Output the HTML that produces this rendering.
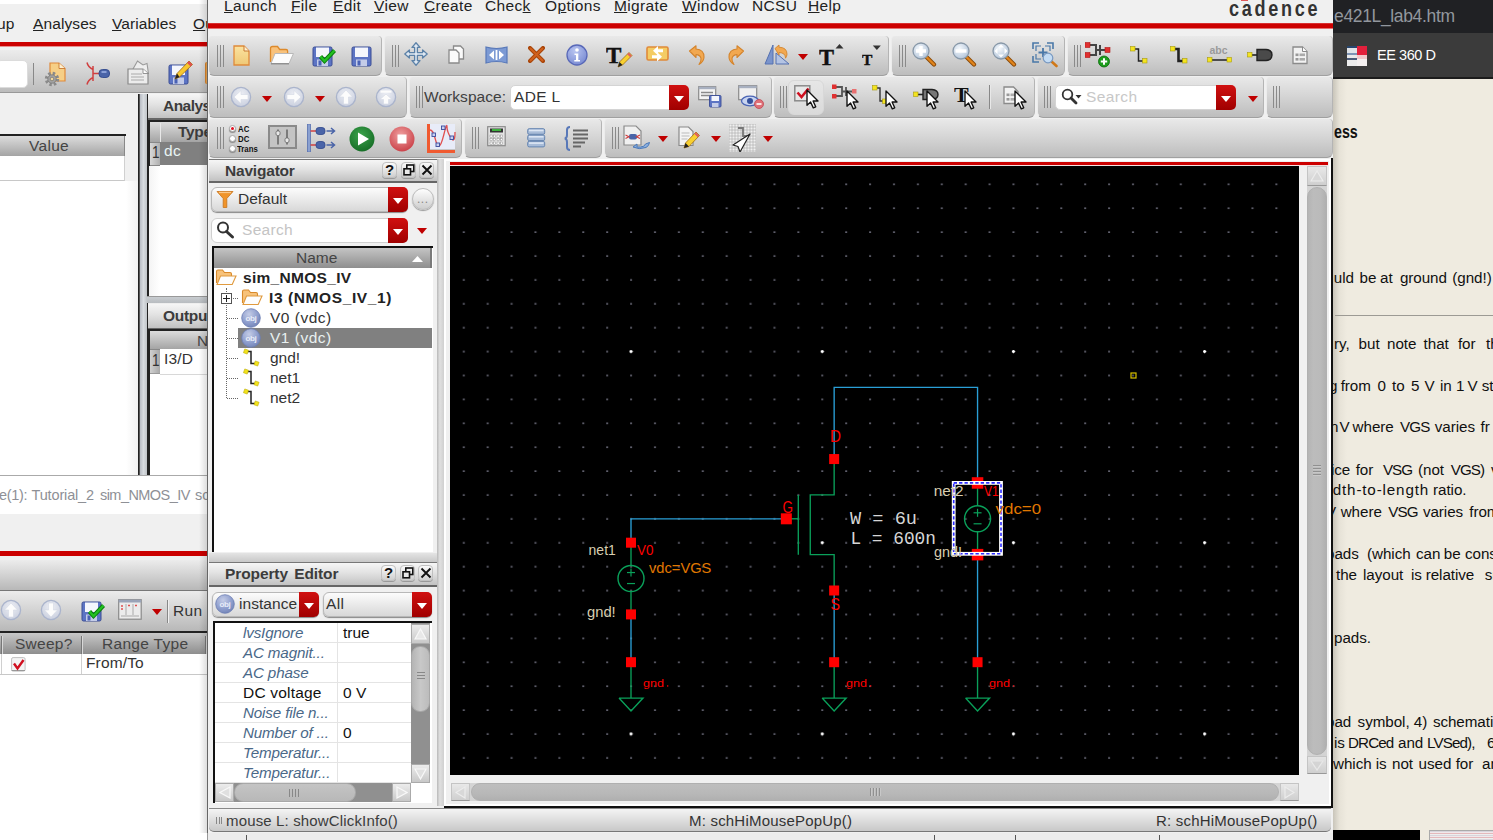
<!DOCTYPE html>
<html><head><meta charset="utf-8"><title>Virtuoso Schematic Editor</title>
<style>
*{box-sizing:border-box;margin:0;padding:0}
html,body{width:1493px;height:840px;overflow:hidden;background:#fff}
body{position:relative;font-family:"Liberation Sans",sans-serif;font-size:16px;color:#222}
.a{position:absolute}
.t{position:absolute;white-space:nowrap;line-height:1}
u{text-decoration:underline;text-underline-offset:1px;text-decoration-thickness:1px}
.tb{position:absolute;background:linear-gradient(#e9e9e9,#d6d6d6 45%,#bdbdbd);border-bottom:1px solid #a0a0a0;border-right:1px solid #b4b4b4;border-left:1px solid #ececec;border-radius:4px 4px 6px 6px}
.grip{position:absolute;width:7px;border-left:1px solid #8a8a8a;border-right:1px solid #8a8a8a}
.grip:after{content:"";position:absolute;left:2px;top:0;bottom:0;width:1px;background:#8a8a8a}
.hd{position:absolute;background:linear-gradient(#dcdcdc,#a4a4a4);color:#444}
.ttl{position:absolute;background:linear-gradient(#f6f6f6,#e2e2e2 45%,#c2c2c2);border-top:1px solid #777;border-bottom:2px solid #666;font-weight:bold;color:#333}
.rbtn{position:absolute;background:linear-gradient(#d01010,#a00000);border-radius:0 5px 5px 0}
.rbtn:after{content:"";position:absolute;left:50%;top:50%;margin:-2px 0 0 -5px;border:5px solid transparent;border-top:6px solid #fff;border-bottom:none}
.tri{position:absolute;width:0;height:0;border:5px solid transparent;border-top:6px solid #c00000;border-bottom:none}
.pg{font-size:15.2px;color:#101010;letter-spacing:-.05px}
</style></head><body>

<!-- ================= BACKGROUND ADE WINDOW (left) ================= -->
<div id="ade" class="a" style="left:0;top:0;width:208px;height:840px;overflow:hidden;background:#fff">
<!--ADE-->
<div class="a" style="left:0;top:4px;width:208px;height:90px;background:#f0f0f0"></div>
<div class="t" style="left:-3px;top:15.8px;font-size:15.5px;letter-spacing:.1px;color:#222">up</div>
<div class="t" style="left:33px;top:15.8px;font-size:15.5px;letter-spacing:.1px;color:#222"><u>A</u>nalyses</div>
<div class="t" style="left:112px;top:15.8px;font-size:15.5px;letter-spacing:.1px;color:#222"><u>V</u>ariables</div>
<div class="t" style="left:193px;top:15.8px;font-size:15.5px;letter-spacing:.1px;color:#222"><u>O</u>utputs</div>
<div class="a" style="left:0;top:42px;width:208px;height:5px;background:linear-gradient(#cc0000 0 4px,#e89090 4px)"></div>
<div class="a" style="left:0;top:50px;width:208px;height:43px;background:linear-gradient(#ececec,#bcbcbc);border-bottom:1px solid #999"></div>
<div class="a" style="left:-4px;top:60px;width:32px;height:28px;background:#fff;border-radius:5px;border:1px solid #dcdcdc"></div>
<div class="a" style="left:33px;top:63px;width:1px;height:22px;background:#888"></div>
<svg class="a" style="left:44px;top:62px" width="23" height="25" viewBox="0 0 23 25"><path d="M6 1H15L21 6.5V19H6z" fill="#f6cf86" stroke="#e08a3a" stroke-width="1.200"/><path d="M15 1V6.5H21" fill="#fdf0d0" stroke="#c87830" stroke-width=".9"/><g transform="translate(8,17)"><circle r="5.600" fill="none" stroke="#8a8a8a" stroke-width="3.200" stroke-dasharray="2.400 2"/><circle r="4.200" fill="#a4a4a4" stroke="#777" stroke-width=".8"/><circle r="1.800" fill="#f0d8a0" stroke="#666" stroke-width=".6"/></g></svg>
<svg class="a" style="left:85px;top:61px" width="26" height="25" viewBox="0 0 26 25"><path d="M2 1.5Q3 6 8 8.5M2 23.5Q3 19 8 16.5M8 5V20M8 12.5H14" fill="none" stroke="#d04040" stroke-width="1.5"/><rect x="14" y="8.5" width="10.5" height="8" rx="3.5" fill="#4a64a8" stroke="#30488c" stroke-width=".9"/><rect x="16.5" y="10" width="5" height="2" fill="#8aa0d8"/></svg>
<svg class="a" style="left:126.5px;top:59.5px" width="23" height="25" viewBox="0 0 23 25"><path d="M6 9L10.5 1L16 5L20 3.5L21.5 14" fill="#eee" stroke="#999" stroke-width="1.100"/><path d="M1 9H16L21 13.5V24H1z" fill="#ececec" stroke="#8a8a8a" stroke-width="1.200"/><path d="M16 9V13.5H21" fill="#fff" stroke="#8a8a8a" stroke-width=".9"/><path d="M4 14h11M4 17h13M4 20h13" stroke="#aaa" stroke-width="1.100"/></svg>
<svg class="a" style="left:167.5px;top:60px" width="26" height="26" viewBox="0 -4 26 26"><rect x="1" y="1" width="19" height="19" rx="1.5" fill="#5c74c4" stroke="#3a4c94" stroke-width="1"/><rect x="4" y="1.5" width="13" height="9.5" fill="#f4f6fc"/><rect x="5" y="13.5" width="11" height="6.5" fill="#c4cce8"/><rect x="6.5" y="14.5" width="3" height="5" fill="#4a62b4"/><path d="M7 15l2-5.5L21-3l3.5 3.5L11.5 13z" fill="#f8c830" stroke="#a06a10" stroke-width=".8"/><path d="M7 15l2-5.5 2.5 3.5z" fill="#222"/><path d="M20-2l3.5 3.5" stroke="#e05050" stroke-width="2.5"/></svg>
<div class="a" style="left:205px;top:62px;width:4px;height:22px;background:#f0a850;border-left:1px solid #d8842c;border-radius:2px 0 0 2px"></div>
<div class="a" style="left:0;top:94px;width:138px;height:382px;background:#f0f0f0"></div>
<div class="a" style="left:0;top:181px;width:126px;height:295px;background:#fff"></div>
<div class="a" style="left:126px;top:181px;width:12px;height:295px;background:linear-gradient(90deg,#fff,#f2f2f2)"></div>
<div class="a" style="left:0;top:134px;width:126px;height:2px;background:#222"></div>
<div class="hd" style="left:0;top:136px;width:125px;height:20px;border-right:1px solid #888"></div>
<div class="t" style="left:29px;top:138px;font-size:15.5px;color:#444;letter-spacing:.3px">Value</div>
<div class="a" style="left:0;top:156px;width:125px;height:25px;background:#fff;border-right:1px solid #d0d0d0;border-bottom:1px solid #c8c8c8"></div>
<div class="a" style="left:138px;top:94px;width:2px;height:382px;background:linear-gradient(90deg,#222 0 1px,#555 1px)"></div>
<div class="a" style="left:140px;top:94px;width:7px;height:382px;background:linear-gradient(90deg,#b8bcc4,#d8dce0 50%,#c0c4c8)"></div>
<div class="a" style="left:147px;top:94px;width:1px;height:382px;background:#222"></div>
<div class="a" style="left:148px;top:94px;width:60px;height:382px;background:#fff"></div>
<div class="ttl" style="left:148px;top:94px;width:60px;height:26px;border-top:none"></div>
<div class="t" style="left:163px;top:98px;font-size:15.5px;font-weight:bold;color:#3c3c3c;letter-spacing:-.55px">Analyses</div>
<div class="a" style="left:148px;top:120px;width:60px;height:2px;background:#222"></div>
<div class="a" style="left:148px;top:120px;width:2px;height:176px;background:#222"></div>
<div class="a" style="left:148px;top:329px;width:2px;height:147px;background:#222"></div>
<div class="hd" style="left:150px;top:122px;width:58px;height:20px"></div><div class="a" style="left:160px;top:123px;width:1px;height:19px;background:#e8e8e8"></div>
<div class="t" style="left:178px;top:124px;font-size:15.5px;font-weight:bold;color:#3c3c3c;letter-spacing:-.3px">Type</div>
<div class="a" style="left:150px;top:142px;width:10px;height:24px;background:linear-gradient(90deg,#d8d8d8,#b0b0b0);border-top:1px solid #888;border-bottom:1px solid #888"></div>
<div class="t" style="left:151.5px;top:145px;font-size:16px;color:#333;transform:scaleX(.85);transform-origin:0 0">1</div>
<div class="a" style="left:160px;top:142px;width:48px;height:23px;background:#808080"></div>
<div class="t" style="left:164px;top:143px;font-size:15.5px;color:#e8f4f4;letter-spacing:.4px">dc</div>
<div class="a" style="left:149px;top:166px;width:11px;height:130px;background:linear-gradient(90deg,#f4f4f4,#fff)"></div>
<div class="a" style="left:147px;top:296px;width:61px;height:7px;background:linear-gradient(#c8ccd0,#b8bcc0);border-top:1px solid #999"></div>
<div class="ttl" style="left:148px;top:303px;width:60px;height:27px;border-top:1px solid #eee"></div>
<div class="t" style="left:163px;top:308px;font-size:15.5px;font-weight:bold;color:#3c3c3c;letter-spacing:-.3px">Outputs</div>
<div class="a" style="left:148px;top:329px;width:60px;height:2px;background:#222"></div>
<div class="hd" style="left:150px;top:331px;width:58px;height:18px"></div>
<div class="t" style="left:197px;top:333px;font-size:15.5px;color:#444">Name</div>
<div class="a" style="left:150px;top:349px;width:10px;height:25px;background:linear-gradient(90deg,#d0d0d0,#a8a8a8);border-top:1px solid #888;border-bottom:1px solid #999"></div>
<div class="t" style="left:151.5px;top:353px;font-size:16px;color:#333;transform:scaleX(.85);transform-origin:0 0">1</div>
<div class="t" style="left:164px;top:351px;font-size:15.5px;color:#333;letter-spacing:.2px">I3/D</div>
<div class="a" style="left:160px;top:374px;width:48px;height:1px;background:#d8d8d8"></div>
<div class="a" style="left:0;top:475px;width:208px;height:39px;background:#fff;border-top:1px solid #aaa"></div>
<div class="t" style="left:-1px;top:488px;font-size:14.5px;color:#8e9096;letter-spacing:-0.3px">e(1):</div>
<div class="t" style="left:31.5px;top:488px;font-size:14.5px;color:#8e9096;letter-spacing:-0.15px">Tutorial_2</div>
<div class="t" style="left:100px;top:488px;font-size:14.5px;color:#8e9096;letter-spacing:-0.55px">sim_NMOS_IV</div>
<div class="t" style="left:195px;top:488px;font-size:14.5px;color:#8e9096;letter-spacing:0px">sc</div>
<div class="a" style="left:0;top:514px;width:208px;height:46px;background:#f0f0f0"></div>
<div class="a" style="left:0;top:551px;width:208px;height:5px;background:#cc0000"></div>
<div class="a" style="left:0;top:560px;width:208px;height:31px;background:linear-gradient(#ececec,#b8b8b8);border-bottom:1px solid #777"></div>
<div class="a" style="left:0;top:591px;width:208px;height:42px;background:linear-gradient(#ececec,#b8b8b8);border-bottom:2px solid #222"></div>
<svg class="a" style="left:0px;top:599px" width="22" height="22" viewBox="0 0 22 22"><defs><radialGradient id="ncg" cx=".5" cy=".35" r=".75"><stop offset="0" stop-color="#eceef4"/><stop offset="1" stop-color="#c6ccdc"/></radialGradient></defs><circle cx="11" cy="11" r="9.600" fill="url(#ncg)" stroke="#aab4cc" stroke-width="1.300"/><g transform="rotate(90 11 11)"><path d="M4 11l7-6.5v4h7v5h-7v4z" fill="#fcfcfc" stroke="#d4d8e4" stroke-width=".6"/></g></svg>
<svg class="a" style="left:40px;top:599px" width="22" height="22" viewBox="0 0 22 22"><defs><radialGradient id="ncg" cx=".5" cy=".35" r=".75"><stop offset="0" stop-color="#eceef4"/><stop offset="1" stop-color="#c6ccdc"/></radialGradient></defs><circle cx="11" cy="11" r="9.600" fill="url(#ncg)" stroke="#aab4cc" stroke-width="1.300"/><g transform="rotate(-90 11 11)"><path d="M4 11l7-6.5v4h7v5h-7v4z" fill="#fcfcfc" stroke="#d4d8e4" stroke-width=".6"/></g></svg>
<svg class="a" style="left:81px;top:600.5px" width="26" height="22" viewBox="0 0 26 22"><rect x="1" y="1" width="19" height="19" rx="1.5" fill="#5c74c4" stroke="#3a4c94" stroke-width="1"/><rect x="4" y="1.5" width="13" height="9.5" fill="#f4f6fc"/><rect x="5" y="13.5" width="11" height="6.5" fill="#c4cce8"/><rect x="6.5" y="14.5" width="3" height="5" fill="#4a62b4"/><path d="M8.5 10.5l4 4.5l10-10.5" fill="none" stroke="#0a7a0a" stroke-width="4.2"/><path d="M8.5 10.5l4 4.5l10-10.5" fill="none" stroke="#22c022" stroke-width="2.4"/></svg>
<svg class="a" style="left:117.5px;top:599px" width="24" height="21" viewBox="0 0 24 21"><rect x=".7" y=".7" width="22.5" height="19.5" fill="#ececec" stroke="#8a8a8a" stroke-width="1.200"/><rect x=".7" y=".7" width="22.5" height="2.800" fill="#9aa4b8"/><path d="M8 5V16M15 5V16M3 17H21" stroke="#aaa" stroke-width="1"/><path d="M3 7h2M3 10h2M10 6.5h2M17 6.5h2" stroke="#e05050" stroke-width="1.400"/></svg>
<div class="tri" style="left:152px;top:608.5px"></div>
<div class="a" style="left:167px;top:600px;width:1px;height:23px;background:#888"></div><div class="a" style="left:168px;top:600px;width:1px;height:23px;background:#f0f0f0"></div>
<div class="t" style="left:173px;top:603px;font-size:15.5px;color:#333;letter-spacing:.3px">Run</div>
<div class="hd" style="left:0;top:633px;width:208px;height:21px;background:linear-gradient(#c8c8c8,#8e8e8e)"></div>
<div class="a" style="left:1px;top:636px;width:1px;height:18px;background:#777"></div><div class="a" style="left:2px;top:636px;width:1px;height:18px;background:#d8d8d8"></div>
<div class="a" style="left:81px;top:636px;width:1px;height:18px;background:#777"></div><div class="a" style="left:82px;top:636px;width:1px;height:18px;background:#d8d8d8"></div>
<div class="a" style="left:205px;top:636px;width:1px;height:18px;background:#777"></div><div class="a" style="left:206px;top:636px;width:1px;height:18px;background:#d8d8d8"></div>
<div class="t" style="left:15px;top:636px;font-size:15.5px;color:#444;letter-spacing:.25px">Sweep?</div>
<div class="t" style="left:102px;top:636px;font-size:15.5px;color:#444;letter-spacing:.3px">Range Type</div>
<div class="a" style="left:0;top:654px;width:208px;height:21px;background:#fff;border-bottom:1px solid #c8c8c8"></div>
<div class="a" style="left:81px;top:654px;width:1px;height:20px;background:#d0d0d0"></div><div class="a" style="left:1px;top:654px;width:1px;height:20px;background:#d0d0d0"></div>
<svg class="a" style="left:10.5px;top:656.5px" width="15" height="15" viewBox="0 0 15 15"><rect x=".6" y=".6" width="13.5" height="13.5" rx="1.5" fill="#f4f4f4" stroke="#c0c0c0" stroke-width="1"/><path d="M.6 13.5H14" stroke="#999" stroke-width="1"/><path d="M3 6.5l3.5 5 6-8.5" fill="none" stroke="#d01020" stroke-width="2.400"/></svg>
<div class="t" style="left:86px;top:655px;font-size:15.5px;color:#333;letter-spacing:.15px">From/To</div>
<div class="a" style="left:199px;top:0;width:8px;height:833px;background:linear-gradient(90deg,rgba(0,0,0,0),rgba(0,0,0,.13))"></div>
<!--/ADE-->
</div>

<!-- ================= BROWSER (right) ================= -->
<div id="web" class="a" style="left:1333px;top:0;width:160px;height:840px;overflow:hidden;background:#efebe0"><!--WEB-->
<div class="a" style="left:-1333px;top:0;width:1493px;height:840px">
<div class="a" style="left:1333px;top:0;width:160px;height:33px;background:#202124"></div>
<div class="t" style="left:1334px;top:8px;font-size:17.5px;color:#92979e;letter-spacing:-.35px">e421L_lab4.htm</div>
<div class="a" style="left:1333px;top:33px;width:160px;height:46px;background:#3b3b3b;border-bottom:2px solid #1c1c1c"></div>
<div class="a" style="left:1347px;top:46px;width:10px;height:20px;background:linear-gradient(#27466e 0 2px,#dfe3e8 2px 7px,#7d93b4 7px 9px,#e8e8ea 9px 12px,#4a5a78 12px 14px,#ececec 14px)"></div>
<div class="a" style="left:1357px;top:46px;width:10px;height:20px;background:linear-gradient(#e2203c 0 9px,#f0c8cc 9px 13px,#f4f0f0 13px)"></div>
<div class="t" style="left:1377px;top:48px;font-size:14.5px;color:#fff;letter-spacing:-.45px">EE 360 D</div>
<div class="a" style="left:1333px;top:79px;width:14px;height:761px;background:linear-gradient(90deg,#c9c5ba,#e6e2d7 45%,#efebe0)"></div>
<div class="t" style="left:1333.5px;top:123px;font-size:18.5px;font-weight:bold;color:#111;transform:scaleX(.77);transform-origin:0 0">ess</div>
<div class="a" style="left:1335px;top:315px;width:158px;height:1px;background:#9c9a94"></div>
<span class="t pg" style="left:1333.8px;top:269.95px">uld</span><span class="t pg" style="left:1359.5px;top:269.95px">be</span><span class="t pg" style="left:1380px;top:269.95px">at</span><span class="t pg" style="left:1399.9px;top:269.95px">ground</span><span class="t pg" style="left:1452.3px;top:269.95px">(gnd!)</span>
<span class="t pg" style="left:1334px;top:335.95px">ry,</span><span class="t pg" style="left:1358.6px;top:335.95px">but</span><span class="t pg" style="left:1387px;top:335.95px">note</span><span class="t pg" style="left:1423.6px;top:335.95px">that</span><span class="t pg" style="left:1457.9px;top:335.95px">for</span><span class="t pg" style="left:1486px;top:335.95px">th</span>
<span class="t pg" style="left:1329px;top:377.65px">g</span><span class="t pg" style="left:1340.7px;top:377.65px">from</span><span class="t pg" style="left:1377.6px;top:377.65px">0</span><span class="t pg" style="left:1392px;top:377.65px">to</span><span class="t pg" style="left:1411px;top:377.65px">5</span><span class="t pg" style="left:1424.5px;top:377.65px">V</span><span class="t pg" style="left:1440px;top:377.65px">in</span><span class="t pg" style="left:1456px;top:377.65px">1</span><span class="t pg" style="left:1467.6px;top:377.65px">V</span><span class="t pg" style="left:1481.7px;top:377.65px">st</span>
<span class="t pg" style="left:1330px;top:419.15px">n</span><span class="t pg" style="left:1339.5px;top:419.15px">V</span><span class="t pg" style="left:1352.6px;top:419.15px">where</span><span class="t pg" style="left:1400px;top:419.15px;letter-spacing:-.9px">VGS</span><span class="t pg" style="left:1434.8px;top:419.15px">varies</span><span class="t pg" style="left:1480.5px;top:419.15px">fr</span>
<span class="t pg" style="left:1331px;top:461.65px">ice</span><span class="t pg" style="left:1355.7px;top:461.65px">for</span><span class="t pg" style="left:1382.9px;top:461.65px;letter-spacing:-.9px">VSG</span><span class="t pg" style="left:1418px;top:461.65px">(not</span><span class="t pg" style="left:1450.7px;top:461.65px;letter-spacing:-.9px">VGS)</span><span class="t pg" style="left:1491px;top:461.65px">v</span>
<span class="t pg" style="left:1328.5px;top:482.15px;letter-spacing:.85px">idth-to-length</span><span class="t pg" style="left:1433px;top:482.15px">ratio.</span>
<span class="t pg" style="left:1326px;top:503.55px">V</span><span class="t pg" style="left:1340.7px;top:503.55px">where</span><span class="t pg" style="left:1388.3px;top:503.55px;letter-spacing:-.9px">VSG</span><span class="t pg" style="left:1422.9px;top:503.55px">varies</span><span class="t pg" style="left:1469.3px;top:503.55px">from</span>
<span class="t pg" style="left:1326px;top:545.95px">pads</span><span class="t pg" style="left:1367px;top:545.95px">(which</span><span class="t pg" style="left:1416px;top:545.95px">can</span><span class="t pg" style="left:1443.8px;top:545.95px">be</span><span class="t pg" style="left:1465px;top:545.95px">cons</span>
<span class="t pg" style="left:1336px;top:566.65px">the</span><span class="t pg" style="left:1363px;top:566.65px">layout</span><span class="t pg" style="left:1411px;top:566.65px">is</span><span class="t pg" style="left:1425.7px;top:566.65px">relative</span><span class="t pg" style="left:1484.8px;top:566.65px">sm</span>
<span class="t pg" style="left:1334px;top:629.75px">pads.</span>
<span class="t pg" style="left:1326px;top:713.85px">pad</span><span class="t pg" style="left:1357.6px;top:713.85px">symbol,</span><span class="t pg" style="left:1413.8px;top:713.85px">4)</span><span class="t pg" style="left:1432.9px;top:713.85px">schemati</span>
<span class="t pg" style="left:1334px;top:734.75px">is</span><span class="t pg" style="left:1348px;top:734.75px;letter-spacing:-.9px">DRCed</span><span class="t pg" style="left:1398px;top:734.75px">and</span><span class="t pg" style="left:1427px;top:734.75px;letter-spacing:-.9px">LVSed),</span><span class="t pg" style="left:1487px;top:734.75px">6</span>
<span class="t pg" style="left:1333px;top:755.75px">which</span><span class="t pg" style="left:1375.7px;top:755.75px">is</span><span class="t pg" style="left:1392px;top:755.75px">not</span><span class="t pg" style="left:1418.6px;top:755.75px">used</span><span class="t pg" style="left:1455.7px;top:755.75px">for</span><span class="t pg" style="left:1482px;top:755.75px">an</span>
<div class="a" style="left:1333px;top:830px;width:87px;height:10px;background:#000"></div>
<div class="a" style="left:1429px;top:830px;width:64px;height:10px;background:repeating-linear-gradient(#d8d4dc 0 1px,#f0e8ea 1px 2px,#e4b8bc 2px 3px,#eeeeee 3px 4px);border-top:1px solid #aaa;border-left:1px solid #aaa"></div>
</div>
<!--/WEB--></div>

<!-- ================= MAIN VIRTUOSO WINDOW ================= -->
<div id="main" class="a" style="left:207px;top:0;width:1126px;height:833px;background:#f0f0f0;border-left:1px solid #666;overflow:hidden">
<div class="a" style="left:-208px;top:0;width:1493px;height:840px">
  <!-- menu bar -->
  <div id="menu" class="a" style="left:209px;top:0;width:1122px;height:23px;font-size:15.5px;letter-spacing:.35px;color:#222">
    <span class="t" style="left:15px;top:-2px"><u>L</u>aunch</span>
    <span class="t" style="left:82px;top:-2px"><u>F</u>ile</span>
    <span class="t" style="left:124px;top:-2px"><u>E</u>dit</span>
    <span class="t" style="left:165px;top:-2px"><u>V</u>iew</span>
    <span class="t" style="left:215px;top:-2px"><u>C</u>reate</span>
    <span class="t" style="left:276px;top:-2px">Chec<u>k</u></span>
    <span class="t" style="left:336px;top:-2px">O<u>p</u>tions</span>
    <span class="t" style="left:405px;top:-2px"><u>M</u>igrate</span>
    <span class="t" style="left:473px;top:-2px"><u>W</u>indow</span>
    <span class="t" style="left:543px;top:-2px">NCSU</span>
    <span class="t" style="left:599px;top:-2px"><u>H</u>elp</span>
    <span class="t" style="left:1020px;top:-2.5px;font-size:22px;letter-spacing:3.3px;font-weight:bold;color:#333;transform:scaleX(.82);transform-origin:0 0">cadence</span><span class="a" style="left:1032px;top:0;width:7px;height:1px;background:#e05858"></span>
  </div>
  <div class="a" style="left:208px;top:23px;width:1125px;height:6px;background:linear-gradient(#d83030 0 1px,#cc0000 1px 5px,#e47070 5px)"></div>

  <!-- toolbar row 1 -->
  <div class="tb" style="left:208px;top:36px;width:174px;height:40px"></div>
  <div class="tb" style="left:384px;top:36px;width:505px;height:40px"></div>
  <div class="tb" style="left:891px;top:36px;width:174px;height:40px"></div>
  <div class="tb" style="left:1067px;top:36px;width:266px;height:40px"></div>
  <!-- toolbar row 2 -->
  <div class="tb" style="left:208px;top:77px;width:199px;height:41px"></div>
  <div class="tb" style="left:409px;top:77px;width:363px;height:41px"></div>
  <div class="tb" style="left:773px;top:77px;width:262px;height:41px"></div>
  <div class="tb" style="left:1037px;top:77px;width:227px;height:41px"></div>
  <div class="tb" style="left:1266px;top:77px;width:67px;height:41px"></div>
  <!-- toolbar row 3 -->
  <div class="tb" style="left:208px;top:119px;width:254px;height:39px"></div>
  <div class="tb" style="left:464px;top:119px;width:138px;height:39px"></div>
  <div class="tb" style="left:604px;top:119px;width:729px;height:39px"></div>
  <!--ICONS-->
<div class="grip" style="left:217px;top:45px;height:22px"></div>
<svg class="a" style="left:233px;top:44.5px" width="17" height="21" viewBox="0 0 17 21"><defs><linearGradient id="nd" x1="0" y1="0" x2="0" y2="1"><stop offset="0" stop-color="#fbe3a0"/><stop offset="1" stop-color="#efc876"/></linearGradient></defs><path d="M1 1H11L16 6V20H1z" fill="url(#nd)" stroke="#e08a3a" stroke-width="1.3"/><path d="M11 1V6H16" fill="#fdf0d0" stroke="#c87830" stroke-width="1"/></svg>
<svg class="a" style="left:269px;top:45px" width="25" height="20" viewBox="0 0 25 20"><path d="M1.5 17V3.5q0-2 2-2h5l2.2 3H17q1.6 0 1.6 1.6V8" fill="#f8c27c" stroke="#dd8a2c" stroke-width="1.3"/><path d="M2 18.5L6 8.5H24.5L20 18.5z" fill="#fcfcfc" stroke="#b8b8b8" stroke-width="1"/><path d="M2 18.8H20" stroke="#888" stroke-width="1.2"/></svg>
<svg class="a" style="left:312px;top:46px" width="26" height="22" viewBox="0 0 26 22"><rect x="1" y="1" width="19" height="19" rx="1.5" fill="#5c74c4" stroke="#3a4c94" stroke-width="1"/><rect x="4" y="1.5" width="13" height="9.5" fill="#f4f6fc"/><rect x="5" y="13.5" width="11" height="6.5" fill="#c4cce8"/><rect x="6.5" y="14.5" width="3" height="5" fill="#4a62b4"/><path d="M8.5 10.5l4 4.5l10-10.5" fill="none" stroke="#0a7a0a" stroke-width="4.2"/><path d="M8.5 10.5l4 4.5l10-10.5" fill="none" stroke="#22c022" stroke-width="2.4"/></svg>
<svg class="a" style="left:351px;top:46px" width="26" height="22" viewBox="0 0 26 22"><rect x="1" y="1" width="19" height="19" rx="1.5" fill="#5c74c4" stroke="#3a4c94" stroke-width="1"/><rect x="4" y="1.5" width="13" height="9.5" fill="#f4f6fc"/><rect x="5" y="13.5" width="11" height="6.5" fill="#c4cce8"/><rect x="6.5" y="14.5" width="3" height="5" fill="#4a62b4"/></svg>
<div class="grip" style="left:392px;top:45px;height:22px"></div>
<svg class="a" style="left:404px;top:42px" width="24" height="24" viewBox="0 0 24 24"><g fill="#dfe8f2" stroke="#5c82a8" stroke-width="1.3" stroke-linejoin="round"><path d="M12 .8l4 4.6h-2.6v5.2h5.2V8l4.6 4-4.6 4v-2.6h-5.2v5.2H16l-4 4.6-4-4.6h2.6v-5.2H5.4V16L.8 12l4.6-4v2.6h5.2V5.4H8z"/></g></svg>
<svg class="a" style="left:448px;top:44.5px" width="17" height="19" viewBox="0 0 17 19"><path d="M5.5 1H12.5L15.5 4V14H5.5z" fill="#fafafa" stroke="#8a8a8a" stroke-width="1.3"/><path d="M1 5H8L11 8V18H1z" fill="#fafafa" stroke="#8a8a8a" stroke-width="1.3"/></svg>
<svg class="a" style="left:485px;top:45.5px" width="23" height="18" viewBox="0 0 23 18"><path d="M1 1Q11.5 4 22 1V17Q11.5 14 1 17z" fill="#7c9ad4" stroke="#5878b8" stroke-width="1.2"/><path d="M4 9l5-4.5v9zM19 9l-5-4.5v9z" fill="#fff"/><rect x="10.6" y="4" width="1.8" height="10" fill="#fff"/></svg>
<svg class="a" style="left:527.5px;top:46px" width="17" height="17" viewBox="0 0 17 17"><path d="M2 2L15 15M15 2L2 15" stroke="#a84408" stroke-width="4" stroke-linecap="round"/><path d="M2.5 2.5L14.5 14.5M14.5 2.5L2.5 14.5" stroke="#d0601c" stroke-width="2" stroke-linecap="round"/></svg>
<svg class="a" style="left:566px;top:44px" width="22" height="22" viewBox="0 0 22 22"><defs><radialGradient id="inf" cx=".4" cy=".3" r=".8"><stop offset="0" stop-color="#b8c4f0"/><stop offset="1" stop-color="#7486d0"/></radialGradient></defs><circle cx="11" cy="11" r="10" fill="url(#inf)" stroke="#5868b8" stroke-width="1.3"/><circle cx="11" cy="6" r="1.8" fill="#fff"/><path d="M8.5 9.5h3.8v6.5h1.7v1.6H8.3V16H10v-5H8.5z" fill="#fff"/></svg>
<svg class="a" style="left:606px;top:43px" width="27" height="26" viewBox="0 0 27 26"><text x="0" y="20" font-family="'Liberation Serif',serif" font-weight="bold" font-size="23" fill="#111" stroke="#111" stroke-width=".5">T</text><path d="M12 24l1.5-5L23 9.5l3 3L16.5 22z" fill="#f8d030" stroke="#a06a10" stroke-width=".8"/><path d="M12 24l1.5-5 3 3z" fill="#222"/><path d="M22 10.5l3 3" stroke="#e06060" stroke-width="2.2"/></svg>
<svg class="a" style="left:645.5px;top:46px" width="23" height="16" viewBox="0 0 23 16"><rect x="1" y="1" width="21" height="13" rx="1.5" fill="#f4cc64" stroke="#e08a3a" stroke-width="1.6"/><path d="M12 0v3.2h5v3h-5V9.4L7 4.7zM11 15.5v-3.2H6v-3h5V6.1l5 4.7z" fill="#fff"/></svg>
<svg class="a" style="left:688px;top:45px" width="18" height="21" viewBox="0 0 18 21"><g><path d="M1.5 6L8 .8V4q8 .5 8 8 0 4.5-5 7.5 2.5-3.5 2-6.2Q12.400 9.800 8 9.600V12.5z" fill="#f2a850" stroke="#d4842c" stroke-width="1.1" stroke-linejoin="round"/></g></svg>
<svg class="a" style="left:727px;top:45px" width="18" height="21" viewBox="0 0 18 21"><g transform="translate(18,0) scale(-1,1)"><path d="M1.5 6L8 .8V4q8 .5 8 8 0 4.5-5 7.5 2.5-3.5 2-6.2Q12.400 9.800 8 9.600V12.5z" fill="#f2a850" stroke="#d4842c" stroke-width="1.1" stroke-linejoin="round"/></g></svg>
<svg class="a" style="left:764px;top:44px" width="26" height="21" viewBox="0 0 26 21"><path d="M9 1V20H1z" fill="#7a94cc" stroke="#5470b0" stroke-width="1"/><path d="M12 9V20H25z" fill="#b4c4e4" stroke="#5470b0" stroke-width="1"/><path d="M11 4.5l4-3.5v2.2q8 .2 8 7 0 2-1.5 4 .2-5.400-6.5-5.700v2.5z" fill="#f2a850" stroke="#d4842c" stroke-width=".9"/></svg>
<div class="tri" style="left:798px;top:53.5px"></div>
<svg class="a" style="left:818.5px;top:40px" width="27" height="27" viewBox="0 0 27 27"><text x="0" y="25" font-family="'Liberation Serif',serif" font-weight="bold" font-size="22.5" fill="#111" stroke="#111" stroke-width=".4">T</text><path d="M16.5075 8.5l4-4.5 4 4.5z" fill="#333"/></svg>
<svg class="a" style="left:861.5px;top:39.5px" width="22" height="27" viewBox="0 0 22 27"><text x="0" y="25" font-family="'Liberation Serif',serif" font-weight="bold" font-size="15.5" fill="#111" stroke="#111" stroke-width=".4">T</text><path d="M10.8385 5.5h8l-4 4.5z" fill="#333"/></svg>
<div class="grip" style="left:899px;top:45px;height:22px"></div>
<svg class="a" style="left:912px;top:42px" width="25" height="25" viewBox="0 0 25 25"><defs><radialGradient id="zg" cx=".4" cy=".35" r=".8"><stop offset="0" stop-color="#f4f8fc"/><stop offset="1" stop-color="#a8bcd4"/></radialGradient></defs><path d="M14.5 15L22 22.5" stroke="#8a4a08" stroke-width="4.200" stroke-linecap="round"/><path d="M14.5 15L22 22.5" stroke="#e0841c" stroke-width="2.400" stroke-linecap="round"/><circle cx="9" cy="9" r="8" fill="url(#zg)" stroke="#8898a8" stroke-width="1.300"/><path d="M4 9h10M9 4v10" stroke="#fff" stroke-width="3.400"/></svg>
<svg class="a" style="left:952px;top:42px" width="25" height="25" viewBox="0 0 25 25"><defs><radialGradient id="zg" cx=".4" cy=".35" r=".8"><stop offset="0" stop-color="#f4f8fc"/><stop offset="1" stop-color="#a8bcd4"/></radialGradient></defs><path d="M14.5 15L22 22.5" stroke="#8a4a08" stroke-width="4.200" stroke-linecap="round"/><path d="M14.5 15L22 22.5" stroke="#e0841c" stroke-width="2.400" stroke-linecap="round"/><circle cx="9" cy="9" r="8" fill="url(#zg)" stroke="#8898a8" stroke-width="1.300"/><path d="M3.5 9h11" stroke="#fff" stroke-width="3.400"/></svg>
<svg class="a" style="left:992px;top:42px" width="25" height="25" viewBox="0 0 25 25"><defs><radialGradient id="zg" cx=".4" cy=".35" r=".8"><stop offset="0" stop-color="#f4f8fc"/><stop offset="1" stop-color="#a8bcd4"/></radialGradient></defs><path d="M14.5 15L22 22.5" stroke="#8a4a08" stroke-width="4.200" stroke-linecap="round"/><path d="M14.5 15L22 22.5" stroke="#e0841c" stroke-width="2.400" stroke-linecap="round"/><circle cx="9" cy="9" r="8" fill="url(#zg)" stroke="#8898a8" stroke-width="1.300"/><path d="M9 2.5l3 3h-6zM9 15.5l3-3h-6zM2.5 9l3-3v6zM15.5 9l-3-3v6z" fill="#fff"/></svg>
<svg class="a" style="left:1031.5px;top:41.5px" width="26" height="26" viewBox="0 0 26 26"><g fill="none" stroke="#4a78a8" stroke-width="1.600"><path d="M1 7V1H7M15 1H21V7M1 14V20H7"/><path d="M4 9V4H9M13 4H18V9M4 12V17H9" stroke-width="1.200"/><path d="M11 6v9M6.5 10.5h9" stroke-width="1.800"/></g><path d="M19 19L24.5 24" stroke="#d07818" stroke-width="2.600" stroke-linecap="round"/><circle cx="16" cy="16" r="4.800" fill="#c4dcf4" stroke="#7898c0" stroke-width="1.200"/></svg>
<div class="grip" style="left:1074px;top:45px;height:22px"></div>
<svg class="a" style="left:1085px;top:42px" width="26" height="26" viewBox="0 0 26 26"><path d="M3 3H11V13H3M11 8H22" fill="none" stroke="#444" stroke-width="2"/><path d="M15 3V13" stroke="#444" stroke-width="2"/><rect x="0" y="0.5" width="5" height="5" fill="#e03030" stroke="#b01818" stroke-width=".6"/><rect x="0" y="10.5" width="5" height="5" fill="#e03030" stroke="#b01818" stroke-width=".6"/><rect x="20" y="5.5" width="5" height="5" fill="#e03030" stroke="#b01818" stroke-width=".6"/><circle cx="19" cy="19.5" r="5.5" fill="#1c9c1c" stroke="#0c6c0c" stroke-width=".8"/><path d="M15.800 19.5h6.400M19 16.300v6.400" stroke="#fff" stroke-width="2"/></svg>
<svg class="a" style="left:1130px;top:45.5px" width="18" height="18" viewBox="0 0 18 18"><path d="M3 3H8.5V15H14.5" fill="none" stroke="#222" stroke-width="1.5"/><rect x=".5" y=".5" width="4.5" height="4.5" fill="#f4e420" stroke="#a89c10" stroke-width=".6"/><rect x="12.5" y="12.5" width="4.5" height="4.5" fill="#f4e420" stroke="#a89c10" stroke-width=".6"/></svg>
<svg class="a" style="left:1170px;top:45.5px" width="18" height="18" viewBox="0 0 18 18"><path d="M3 3H8.5V15H14.5" fill="none" stroke="#222" stroke-width="2.6"/><rect x=".5" y=".5" width="4.5" height="4.5" fill="#f4e420" stroke="#a89c10" stroke-width=".6"/><rect x="12.5" y="12.5" width="4.5" height="4.5" fill="#f4e420" stroke="#a89c10" stroke-width=".6"/></svg>
<svg class="a" style="left:1207px;top:45px" width="25" height="18" viewBox="0 0 25 18"><text x="2.5" y="8.5" font-family="'Liberation Sans',sans-serif" font-size="10.5" font-weight="bold" fill="#9a9a9a">abc</text><path d="M3 15H22" stroke="#222" stroke-width="1.5"/><rect x=".5" y="12.5" width="4.5" height="4.5" fill="#f4e420" stroke="#a89c10" stroke-width=".6"/><rect x="20" y="12.5" width="4.5" height="4.5" fill="#f4e420" stroke="#a89c10" stroke-width=".6"/></svg>
<svg class="a" style="left:1247px;top:48px" width="27" height="14" viewBox="0 0 27 14"><path d="M3 7H10" stroke="#222" stroke-width="1.600"/><path d="M10 1.5H19Q25 2 25 7T19 12.5H10z" fill="#4a4a4a" stroke="#222" stroke-width="1.400"/><rect x=".5" y="4.5" width="4.5" height="4.5" fill="#f4e420" stroke="#a89c10" stroke-width=".6"/></svg>
<svg class="a" style="left:1291.5px;top:45.5px" width="16" height="19" viewBox="0 0 16 19"><path d="M1 1H10.5L15 5.5V17.5H1z" fill="#f2f2f2" stroke="#8a8a8a" stroke-width="1.300"/><path d="M10.5 1V5.5H15" fill="#fff" stroke="#8a8a8a" stroke-width="1"/><rect x="3.5" y="7.5" width="3" height="2.600" fill="#999"/><rect x="7.5" y="7.5" width="5.5" height="2.600" fill="#aaa"/><rect x="3.5" y="12" width="3" height="2.600" fill="#999"/><rect x="7.5" y="12" width="5.5" height="2.600" fill="#aaa"/></svg>
<div class="grip" style="left:217px;top:86px;height:22px"></div>
<svg class="a" style="left:230px;top:86px" width="22" height="22" viewBox="0 0 22 22"><defs><radialGradient id="ncg" cx=".5" cy=".35" r=".75"><stop offset="0" stop-color="#eceef4"/><stop offset="1" stop-color="#c6ccdc"/></radialGradient></defs><circle cx="11" cy="11" r="9.600" fill="url(#ncg)" stroke="#aab4cc" stroke-width="1.300"/><path d="M4 11l7-6.5v4h7v5h-7v4z" fill="#fcfcfc" stroke="#d4d8e4" stroke-width=".6"/></svg>
<div class="tri" style="left:262px;top:95.5px"></div>
<svg class="a" style="left:283px;top:86px" width="22" height="22" viewBox="0 0 22 22"><defs><radialGradient id="ncg" cx=".5" cy=".35" r=".75"><stop offset="0" stop-color="#eceef4"/><stop offset="1" stop-color="#c6ccdc"/></radialGradient></defs><circle cx="11" cy="11" r="9.600" fill="url(#ncg)" stroke="#aab4cc" stroke-width="1.300"/><g transform="translate(22,0) scale(-1,1)"><path d="M4 11l7-6.5v4h7v5h-7v4z" fill="#fcfcfc" stroke="#d4d8e4" stroke-width=".6"/></g></svg>
<div class="tri" style="left:315px;top:95.5px"></div>
<svg class="a" style="left:335px;top:86px" width="22" height="22" viewBox="0 0 22 22"><defs><radialGradient id="ncg" cx=".5" cy=".35" r=".75"><stop offset="0" stop-color="#eceef4"/><stop offset="1" stop-color="#c6ccdc"/></radialGradient></defs><circle cx="11" cy="11" r="9.600" fill="url(#ncg)" stroke="#aab4cc" stroke-width="1.300"/><g transform="rotate(90 11 11)"><path d="M4 11l7-6.5v4h7v5h-7v4z" fill="#fcfcfc" stroke="#d4d8e4" stroke-width=".6"/></g></svg>
<svg class="a" style="left:375px;top:86px" width="22" height="22" viewBox="0 0 22 22"><defs><radialGradient id="ncg" cx=".5" cy=".35" r=".75"><stop offset="0" stop-color="#eceef4"/><stop offset="1" stop-color="#c6ccdc"/></radialGradient></defs><circle cx="11" cy="11" r="9.600" fill="url(#ncg)" stroke="#aab4cc" stroke-width="1.300"/><rect x="5.5" y="4.5" width="11" height="2.200" fill="#fcfcfc"/><path d="M11 8l6 5.5h-3.5v4.5h-5v-4.5H5z" fill="#fcfcfc" stroke="#d4d8e4" stroke-width=".6"/></svg>
<div class="grip" style="left:416px;top:86px;height:22px"></div>
<div class="t" style="left:424px;top:89px;font-size:15.5px;color:#404040;letter-spacing:.05px">Workspace:</div>
<div class="a" style="left:510px;top:85px;width:179px;height:25px;border-radius:5px;background:#fff;border:1px solid #d4d4d4"></div>
<div class="rbtn" style="left:669px;top:85px;width:20px;height:25px"></div>
<div class="t" style="left:514px;top:89px;font-size:15.5px;color:#333;letter-spacing:.3px">ADE L</div>
<svg class="a" style="left:698px;top:85.5px" width="24" height="22" viewBox="0 0 24 22"><rect x=".7" y=".7" width="17" height="13" fill="#f4f4f4" stroke="#8a8a8a" stroke-width="1.200"/><rect x=".7" y=".7" width="17" height="2.5" fill="#a8b0c0"/><path d="M3 6.5h12M3 9.5h12" stroke="#8a8a8a" stroke-width="1.300"/><rect x="11.5" y="9.5" width="11.5" height="11.5" rx="1" fill="#5c74c4" stroke="#3a4c94" stroke-width=".9"/><rect x="13.5" y="10" width="7.5" height="5" fill="#f4f6fc"/><rect x="14" y="17" width="6.5" height="4" fill="#c4cce8"/></svg>
<svg class="a" style="left:738px;top:85px" width="26" height="24" viewBox="0 0 26 24"><rect x=".7" y=".7" width="18" height="14" fill="#f0f0f0" stroke="#8a8a8a" stroke-width="1.200"/><rect x=".7" y=".7" width="18" height="2.5" fill="#a8b0c0"/><ellipse cx="12" cy="16" rx="8.5" ry="4.800" fill="#c8d4f0" stroke="#4a64b4" stroke-width="1.300"/><circle cx="12" cy="16" r="3" fill="#34509c"/><circle cx="21" cy="19" r="4.5" fill="#e07078" stroke="#c04850" stroke-width=".8"/><rect x="18.5" y="18.200" width="5" height="1.600" fill="#fff"/></svg>
<div class="grip" style="left:780px;top:86px;height:22px"></div>
<div class="a" style="left:788px;top:80px;width:36px;height:35px;border-radius:6px;background:linear-gradient(#e6e6e6,#dadada);border:1px solid #d8d8d8"></div>
<svg class="a" style="left:794px;top:85px" width="26" height="27" viewBox="0 0 26 27"><rect x=".8" y=".8" width="15" height="15" fill="#e8e8e8" stroke="#8a8a8a" stroke-width="1.5"/><path d="M3.5 7.5l4 4.5 7-8.5" fill="none" stroke="#d01020" stroke-width="2.600"/><path transform="translate(13,5) scale(1.05)" d="M0 0V14.5L3.400 11.5L6 17L8.300 16L5.800 10.5H10.5z" fill="#fff" stroke="#111" stroke-width="1.300" stroke-linejoin="round"/></svg>
<svg class="a" style="left:831.5px;top:84px" width="28" height="28" viewBox="0 0 28 28"><path d="M3 3H10V12H3M10 7.5H21" fill="none" stroke="#555" stroke-width="1.800"/><path d="M14 3V12" stroke="#555" stroke-width="1.800"/><rect x="0" y=".5" width="4.5" height="4.5" fill="#e03030"/><rect x="0" y="10" width="4.5" height="4.5" fill="#e03030"/><rect x="20" y="5" width="4.5" height="4.5" fill="#e87070"/><path transform="translate(15,7) scale(1.05)" d="M0 0V14.5L3.400 11.5L6 17L8.300 16L5.800 10.5H10.5z" fill="#fff" stroke="#111" stroke-width="1.300" stroke-linejoin="round"/></svg>
<svg class="a" style="left:872px;top:84.5px" width="28" height="28" viewBox="0 0 28 28"><path d="M3 3H8V16H13" fill="none" stroke="#333" stroke-width="1.400"/><rect x=".5" y=".5" width="4.5" height="4.5" fill="#f4e420" stroke="#a89c10" stroke-width=".6"/><rect x="10.5" y="14" width="4.5" height="4.5" fill="#f4e420" stroke="#a89c10" stroke-width=".6"/><path transform="translate(14,6) scale(1.05)" d="M0 0V14.5L3.400 11.5L6 17L8.300 16L5.800 10.5H10.5z" fill="#fff" stroke="#111" stroke-width="1.300" stroke-linejoin="round"/></svg>
<svg class="a" style="left:913px;top:88px" width="28" height="24" viewBox="0 0 28 24"><path d="M3 6.5H10" stroke="#222" stroke-width="1.600"/><path d="M10 1.5H19Q25 2 25 6.5T19 11.5H10z" fill="#777" stroke="#222" stroke-width="1.400"/><rect x=".5" y="4" width="4.5" height="4.5" fill="#f4e420" stroke="#a89c10" stroke-width=".6"/><path transform="translate(14,3) scale(1.05)" d="M0 0V14.5L3.400 11.5L6 17L8.300 16L5.800 10.5H10.5z" fill="#fff" stroke="#111" stroke-width="1.300" stroke-linejoin="round"/></svg>
<svg class="a" style="left:954px;top:84px" width="26" height="28" viewBox="0 0 26 28"><text x="0" y="18" font-family="'Liberation Serif',serif" font-weight="bold" font-size="22" fill="#111">T</text><path transform="translate(11,7) scale(1.05)" d="M0 0V14.5L3.400 11.5L6 17L8.300 16L5.800 10.5H10.5z" fill="#fff" stroke="#111" stroke-width="1.300" stroke-linejoin="round"/></svg>
<div class="a" style="left:989px;top:85px;width:1px;height:24px;background:#888"></div><div class="a" style="left:990px;top:85px;width:1px;height:24px;background:#e8e8e8"></div>
<svg class="a" style="left:1003px;top:85.5px" width="26" height="27" viewBox="0 0 26 27"><path d="M1 1H10.5L15 5.5V17.5H1z" fill="#f2f2f2" stroke="#8a8a8a" stroke-width="1.300"/><rect x="3.5" y="7.5" width="3" height="2.600" fill="#999"/><rect x="7.5" y="7.5" width="5.5" height="2.600" fill="#aaa"/><rect x="3.5" y="12" width="3" height="2.600" fill="#999"/><rect x="7.5" y="12" width="5.5" height="2.600" fill="#aaa"/><path transform="translate(12,5) scale(1.05)" d="M0 0V14.5L3.400 11.5L6 17L8.300 16L5.800 10.5H10.5z" fill="#fff" stroke="#111" stroke-width="1.300" stroke-linejoin="round"/></svg>
<div class="grip" style="left:1044px;top:86px;height:22px"></div>
<div class="a" style="left:1055px;top:85px;width:181px;height:25px;border-radius:5px;background:#fff;border:1px solid #d4d4d4"></div>
<div class="rbtn" style="left:1216px;top:85px;width:20px;height:25px"></div>
<svg class="a" style="left:1061px;top:88px" width="22" height="18" viewBox="0 0 22 18"><circle cx="6.5" cy="6.5" r="4.800" fill="#fff" stroke="#333" stroke-width="1.800"/><path d="M10 10L15 15" stroke="#333" stroke-width="2.800" stroke-linecap="round"/><path d="M14.5 7h6l-3 3.5z" fill="#333"/></svg>
<div class="t" style="left:1086px;top:89px;font-size:15.5px;color:#c8c8c8;letter-spacing:.4px">Search</div>
<div class="tri" style="left:1247.5px;top:95.5px"></div>
<div class="grip" style="left:1273px;top:86px;height:22px"></div>
<div class="grip" style="left:217px;top:127px;height:22px"></div>
<div class="a" style="left:228.5px;top:125.0px;width:7px;height:7px;border-radius:4px;background:#fff;border:1px solid #aaa;box-shadow:0 1px 1px #888"></div>
<div class="a" style="left:230.5px;top:127.0px;width:3px;height:3px;border-radius:2px;background:#e01020"></div>
<div class="t" style="left:238px;top:124.0px;font-size:9.5px;font-weight:bold;color:#111;transform:scaleX(.82);transform-origin:0 0">AC</div>
<div class="a" style="left:228.5px;top:135.0px;width:7px;height:7px;border-radius:4px;background:#fff;border:1px solid #aaa;box-shadow:0 1px 1px #888"></div>
<div class="t" style="left:238px;top:134.0px;font-size:9.5px;font-weight:bold;color:#111;transform:scaleX(.82);transform-origin:0 0">DC</div>
<div class="a" style="left:228.5px;top:145.0px;width:7px;height:7px;border-radius:4px;background:#fff;border:1px solid #aaa;box-shadow:0 1px 1px #888"></div>
<div class="t" style="left:237px;top:144.0px;font-size:9.5px;font-weight:bold;color:#111;transform:scaleX(.82);transform-origin:0 0">Trans</div>
<svg class="a" style="left:267.5px;top:125px" width="29" height="24" viewBox="0 0 29 24"><rect x="1" y="1" width="27" height="22" fill="#c4c4c4" stroke="#8a8a8a" stroke-width="2"/><path d="M10 4.5V19.5M19 4.5V19.5" stroke="#555" stroke-width="1.300"/><rect x="8" y="6" width="4" height="4.5" rx="1.5" fill="#e8e8e8" stroke="#666" stroke-width=".8"/><rect x="17" y="13" width="4" height="4.5" rx="1.5" fill="#e8e8e8" stroke="#666" stroke-width=".8"/></svg>
<svg class="a" style="left:306.5px;top:124px" width="29" height="28" viewBox="0 0 29 28"><rect x=".5" y="0" width="3" height="28" fill="#8aa0d0" stroke="#5870b0" stroke-width=".8"/><path d="M3.5 7H9" stroke="#d04040" stroke-width="1.5"/><rect x="9" y="3.5" width="9" height="7" rx="3" fill="#4a64a8" stroke="#30488c" stroke-width=".8"/><path d="M19.5 7H27M24 4l3.5 3-3.5 3" fill="none" stroke="#4a64a8" stroke-width="1.5"/><path d="M3.5 21H9" stroke="#d04040" stroke-width="1.5"/><rect x="9" y="17.5" width="9" height="7" rx="3" fill="#4a64a8" stroke="#30488c" stroke-width=".8"/><path d="M19.5 21H27M24 18l3.5 3-3.5 3" fill="none" stroke="#4a64a8" stroke-width="1.5"/></svg>
<svg class="a" style="left:348.5px;top:125.5px" width="26" height="26" viewBox="0 0 26 26"><defs><radialGradient id="pg" cx=".45" cy=".35" r=".7"><stop offset="0" stop-color="#3ca44c"/><stop offset="1" stop-color="#146a24"/></radialGradient></defs><circle cx="13" cy="13" r="12.5" fill="url(#pg)"/><path d="M9 6.5V19.5L20 13z" fill="#fff"/></svg>
<svg class="a" style="left:388.5px;top:125.5px" width="26" height="26" viewBox="0 0 26 26"><defs><radialGradient id="sg" cx=".45" cy=".35" r=".7"><stop offset="0" stop-color="#f0a0a0"/><stop offset="1" stop-color="#c83c44"/></radialGradient></defs><circle cx="13" cy="13" r="12.5" fill="url(#sg)"/><rect x="8.5" y="8.5" width="9" height="9" fill="#fff"/></svg>
<svg class="a" style="left:427px;top:124px" width="29" height="29" viewBox="0 0 29 29"><rect x="2" y="0" width="26" height="25" fill="#e8ecf8"/><path d="M1.5 0V27.5H28" fill="none" stroke="#f05a30" stroke-width="3"/><path d="M3 6Q6 6 8 14T12 22T17 10T20 3T24 14T28 8" fill="none" stroke="#e05050" stroke-width="1.300"/><g fill="#c8d0f0" stroke="#3a4a9c" stroke-width=".9"><rect x="5" y="9" width="3.5" height="3.5"/><rect x="9" y="19" width="3.5" height="3.5"/><rect x="14.5" y="2" width="3.5" height="3.5"/><rect x="23" y="12" width="3.5" height="3.5"/></g></svg>
<div class="grip" style="left:472px;top:127px;height:22px"></div>
<svg class="a" style="left:486.5px;top:126px" width="19" height="21" viewBox="0 0 19 21"><rect x=".7" y=".7" width="17.5" height="19" fill="#e4e4e4" stroke="#8a8a8a" stroke-width="1.200"/><rect x="3" y="2.5" width="13" height="4" fill="#333"/><rect x="5" y="3.200" width="9" height="1.600" fill="#40d040"/><rect x="3.0" y="9.0" width="2.200" height="2.200" fill="#fff" stroke="#888" stroke-width=".5"/><rect x="6.5" y="9.0" width="2.200" height="2.200" fill="#fff" stroke="#888" stroke-width=".5"/><rect x="10.0" y="9.0" width="2.200" height="2.200" fill="#fff" stroke="#888" stroke-width=".5"/><rect x="13.5" y="9.0" width="2.200" height="2.200" fill="#fff" stroke="#888" stroke-width=".5"/><rect x="3.0" y="12.5" width="2.200" height="2.200" fill="#fff" stroke="#888" stroke-width=".5"/><rect x="6.5" y="12.5" width="2.200" height="2.200" fill="#fff" stroke="#888" stroke-width=".5"/><rect x="10.0" y="12.5" width="2.200" height="2.200" fill="#fff" stroke="#888" stroke-width=".5"/><rect x="13.5" y="12.5" width="2.200" height="2.200" fill="#fff" stroke="#888" stroke-width=".5"/><rect x="3.0" y="16.0" width="2.200" height="2.200" fill="#fff" stroke="#888" stroke-width=".5"/><rect x="6.5" y="16.0" width="2.200" height="2.200" fill="#fff" stroke="#888" stroke-width=".5"/><rect x="10.0" y="16.0" width="2.200" height="2.200" fill="#fff" stroke="#888" stroke-width=".5"/><rect x="13.5" y="16.0" width="2.200" height="2.200" fill="#fff" stroke="#888" stroke-width=".5"/></svg>
<svg class="a" style="left:527px;top:127.5px" width="19" height="20" viewBox="0 0 19 20"><rect x=".7" y="0.7" width="17" height="5.600" rx="1.5" fill="#a8bcd8" stroke="#6484b0" stroke-width="1"/><rect x="2" y="1.7" width="14.5" height="1.600" fill="#dce6f4"/><rect x=".7" y="7.0" width="17" height="5.600" rx="1.5" fill="#a8bcd8" stroke="#6484b0" stroke-width="1"/><rect x="2" y="8.0" width="14.5" height="1.600" fill="#dce6f4"/><rect x=".7" y="13.299999999999999" width="17" height="5.600" rx="1.5" fill="#a8bcd8" stroke="#6484b0" stroke-width="1"/><rect x="2" y="14.299999999999999" width="14.5" height="1.600" fill="#dce6f4"/></svg>
<svg class="a" style="left:563.5px;top:125.5px" width="26" height="26" viewBox="0 0 26 26"><path d="M6 1Q3 1 3 4V9Q3 12 .8 12.5Q3 13 3 16V21Q3 24 6 24" fill="none" stroke="#5878b8" stroke-width="2"/><path d="M9 4.5H24M9 8.5H24M9 12.5H24M9 16.5H21M9 20.5H17" stroke="#666" stroke-width="1.800"/></svg>
<div class="grip" style="left:612px;top:127px;height:22px"></div>
<svg class="a" style="left:623px;top:124.5px" width="28" height="27" viewBox="0 0 28 27"><path d="M1 1H13L18 6V20H1z" fill="#f0f0f0" stroke="#8a8a8a" stroke-width="1.200"/><rect x="6" y="9" width="8" height="5.5" rx="2" fill="#4a64a8"/><path d="M2.5 10l3.5 1.700-3.5 1.800M17 10l-3.5 1.700 3.5 1.800" stroke="#d04040" stroke-width="1.200" fill="none"/><path d="M10 22q6 3 13 .5 3-1.5 3.5-5l-4 1.5q-1 3-5 3H14v-3z" fill="#8ab0e0" stroke="#4a78b8" stroke-width="1"/></svg>
<div class="tri" style="left:658px;top:135.5px"></div>
<svg class="a" style="left:677.5px;top:125.5px" width="24" height="23" viewBox="0 0 24 23"><path d="M1 1H10.5L15 5.5V19.5H1z" fill="#f4f4f4" stroke="#8a8a8a" stroke-width="1.200"/><path d="M3.5 7h8M3.5 10h8M3.5 13h6" stroke="#bbb" stroke-width="1"/><path d="M6 22l1.5-5L18 6l3.5 3.5L11 20.5z" fill="#f8d030" stroke="#a06a10" stroke-width=".8"/><path d="M6 22l1.5-5 3.5 3.5z" fill="#222"/><path d="M17 7l3.5 3.5" stroke="#e06060" stroke-width="2.200"/></svg>
<div class="tri" style="left:710.5px;top:135.5px"></div>
<svg class="a" style="left:728.5px;top:124px" width="27" height="28" viewBox="0 0 27 28"><rect x="0" y="0" width="27" height="28" fill="#f0f0f0"/><path d="M0 0V28M0 0H27" stroke="#aaa" stroke-width=".6"/><path d="M3 0V28M0 3H27" stroke="#aaa" stroke-width=".6"/><path d="M6 0V28M0 6H27" stroke="#aaa" stroke-width=".6"/><path d="M9 0V28M0 9H27" stroke="#aaa" stroke-width=".6"/><path d="M12 0V28M0 12H27" stroke="#aaa" stroke-width=".6"/><path d="M15 0V28M0 15H27" stroke="#aaa" stroke-width=".6"/><path d="M18 0V28M0 18H27" stroke="#aaa" stroke-width=".6"/><path d="M21 0V28M0 21H27" stroke="#aaa" stroke-width=".6"/><path d="M24 0V28M0 24H27" stroke="#aaa" stroke-width=".6"/><path d="M27 0V28M0 27H27" stroke="#aaa" stroke-width=".6"/><path d="M9 4H14V12H20" fill="none" stroke="#777" stroke-width="1.800"/><path d="M21 10L4 21l5 1.5 2 5.5z" fill="#fff" stroke="#222" stroke-width="1.200" stroke-linejoin="round"/></svg>
<div class="tri" style="left:763px;top:135.5px"></div>
<!--/ICONS-->

  <!-- navigator -->
  <div class="ttl" style="left:209px;top:159px;width:228px;height:24px"></div>
  <div class="t" style="left:225px;top:163px;font-size:15.5px;font-weight:bold;color:#3c3c3c;letter-spacing:-.2px">Navigator</div>
  <!--NAV-->
<div class="a" style="left:382px;top:162px;width:15px;height:16px;border-radius:4px;background:linear-gradient(#fafafa,#cfcfcf);border:1px solid #c0c0c0;box-shadow:0 1px 0 #999"></div><div class="a" style="left:401px;top:162px;width:15px;height:16px;border-radius:4px;background:linear-gradient(#fafafa,#cfcfcf);border:1px solid #c0c0c0;box-shadow:0 1px 0 #999"></div><div class="a" style="left:419px;top:162px;width:15px;height:16px;border-radius:4px;background:linear-gradient(#fafafa,#cfcfcf);border:1px solid #c0c0c0;box-shadow:0 1px 0 #999"></div><div class="t" style="left:385px;top:162px;font-size:15px;font-weight:bold;color:#111">?</div><svg class="a" style="left:403px;top:164px" width="12" height="12" viewBox="0 0 12 12"><rect x="3.8" y="1" width="7" height="6.5" fill="none" stroke="#111" stroke-width="1.6"/><rect x="1" y="4.8" width="6.5" height="6" fill="#e8e8e8" stroke="#111" stroke-width="1.6"/></svg><svg class="a" style="left:421px;top:164px" width="12" height="12" viewBox="0 0 12 12"><path d="M1.5 1.5l9 9M10.5 1.5l-9 9" stroke="#111" stroke-width="1.9"/></svg>
<div class="a" style="left:211px;top:187px;width:197px;height:25px;border-radius:6px;background:linear-gradient(#fcfcfc,#d8d8d8);border:1px solid #b8b8b8;box-shadow:0 1px 1px #888"></div>
<div class="rbtn" style="left:388px;top:187px;width:20px;height:25px"></div>
<svg class="a" style="left:216px;top:190px" width="18" height="19" viewBox="0 0 18 19"><path d="M1 1.5H17L10.8 8.5V17.5H7.2V8.5z" fill="#f0942a" stroke="#c8741a" stroke-width=".8"/><path d="M3 2.5H15" stroke="#fbc98a" stroke-width="1.2"/></svg>
<div class="t" style="left:238px;top:191px;font-size:15.5px;color:#333;letter-spacing:0">Default</div>
<div class="a" style="left:412px;top:188px;width:22px;height:22px;border-radius:11px;background:linear-gradient(#fefefe,#cecece);border:1px solid #bcbcbc;box-shadow:0 1px 1px #999"></div>
<div class="t" style="left:417px;top:193px;font-size:12px;color:#888;letter-spacing:.5px">...</div>
<div class="a" style="left:211px;top:218px;width:197px;height:25px;border-radius:6px;background:#fff;border:1px solid #d0d0d0"></div>
<div class="rbtn" style="left:388px;top:218px;width:20px;height:25px"></div>
<svg class="a" style="left:215px;top:220px" width="20" height="20" viewBox="0 0 20 20"><circle cx="8" cy="7.5" r="5" fill="#fff" stroke="#333" stroke-width="2"/><path d="M11.5 11.5L17.5 17" stroke="#333" stroke-width="3" stroke-linecap="round"/></svg>
<div class="t" style="left:242px;top:222px;font-size:15.5px;color:#c4c4c4;letter-spacing:.3px">Search</div>
<div class="tri" style="left:417px;top:228px"></div>
<!-- tree -->
<div class="a" style="left:212px;top:246px;width:221px;height:306px;background:#fff;border-left:2px solid #111;border-top:2px solid #111"></div>
<div class="hd" style="left:214px;top:248px;width:218px;height:20px;border-right:2px solid #7a7a7a;background:linear-gradient(#c4c4c4,#8e8e8e)"></div>
<div class="t" style="left:296px;top:250px;font-size:15.5px;color:#444;letter-spacing:0">Name</div>
<svg class="a" style="left:411px;top:254px" width="13" height="9" viewBox="0 0 13 9"><path d="M1 8L6.5 2L12 8z" fill="#fff"/></svg>
<svg class="a" style="left:215px;top:268px" width="22" height="19" viewBox="0 0 22 19"><path d="M1.5 15V3.5q0-1.5 1.5-1.5h4.5l2 2.5H15q1.5 0 1.5 1.5V8" fill="#f7c27a" stroke="#d98a2b" stroke-width="1.1"/><path d="M2 16.5L5.5 8H21l-3.8 8.5z" fill="#fdfdfd" stroke="#e09a3e" stroke-width="1.1"/></svg><div class="t" style="left:243px;top:270px;font-size:15.5px;font-weight:bold;color:#222;letter-spacing:.3px">sim_NMOS_IV</div><div class="a" style="left:226px;top:288px;width:0;height:110px;border-left:1px dotted #666"></div><div class="a" style="left:227px;top:298px;width:11px;height:0;border-top:1px dotted #666"></div><div class="a" style="left:227px;top:318px;width:11px;height:0;border-top:1px dotted #666"></div><div class="a" style="left:227px;top:338px;width:11px;height:0;border-top:1px dotted #666"></div><div class="a" style="left:227px;top:358px;width:11px;height:0;border-top:1px dotted #666"></div><div class="a" style="left:227px;top:378px;width:11px;height:0;border-top:1px dotted #666"></div><div class="a" style="left:227px;top:398px;width:11px;height:0;border-top:1px dotted #666"></div><div class="a" style="left:221px;top:293px;width:11px;height:11px;background:#fff;border:1px solid #555"></div><div class="a" style="left:223px;top:298px;width:7px;height:1px;background:#222"></div><div class="a" style="left:226px;top:295px;width:1px;height:7px;background:#222"></div><svg class="a" style="left:241px;top:288px" width="22" height="19" viewBox="0 0 22 19"><path d="M1.5 15V3.5q0-1.5 1.5-1.5h4.5l2 2.5H15q1.5 0 1.5 1.5V8" fill="#f7c27a" stroke="#d98a2b" stroke-width="1.1"/><path d="M2 16.5L5.5 8H21l-3.8 8.5z" fill="#fdfdfd" stroke="#e09a3e" stroke-width="1.1"/></svg><div class="t" style="left:269px;top:290px;font-size:15.5px;font-weight:bold;color:#222;letter-spacing:.6px">I3 (NMOS_IV_1)</div><div class="a" style="left:238px;top:328px;width:194px;height:20px;background:#808080"></div><svg class="a" style="left:241px;top:308px" width="20" height="20" viewBox="0 0 20 20"><defs><radialGradient id="og1" cx=".4" cy=".3" r=".8"><stop offset="0" stop-color="#c4cce6"/><stop offset=".6" stop-color="#8c9ccc"/><stop offset="1" stop-color="#6c7eb0"/></radialGradient></defs><circle cx="10" cy="10" r="9.3" fill="url(#og1)" stroke="#6c7eb4" stroke-width=".8"/><text x="10" y="13" font-size="8" font-family="'Liberation Sans',sans-serif" font-weight="bold" fill="#e8ecf8" text-anchor="middle" letter-spacing="-.4">obj</text></svg><svg class="a" style="left:241px;top:328px" width="20" height="20" viewBox="0 0 20 20"><defs><radialGradient id="og2" cx=".4" cy=".3" r=".8"><stop offset="0" stop-color="#c4cce6"/><stop offset=".6" stop-color="#8c9ccc"/><stop offset="1" stop-color="#6c7eb0"/></radialGradient></defs><circle cx="10" cy="10" r="9.3" fill="url(#og2)" stroke="#6c7eb4" stroke-width=".8"/><text x="10" y="13" font-size="8" font-family="'Liberation Sans',sans-serif" font-weight="bold" fill="#e8ecf8" text-anchor="middle" letter-spacing="-.4">obj</text></svg><div class="t" style="left:270px;top:310px;font-size:15.5px;color:#333;letter-spacing:.5px">V0 (vdc)</div><div class="t" style="left:270px;top:330px;font-size:15.5px;color:#e8f0f0;letter-spacing:.5px">V1 (vdc)</div><svg class="a" style="left:243px;top:348px" width="18" height="20" viewBox="0 0 18 20"><path d="M3.5 3.5H8V15.5H13.5" fill="none" stroke="#222" stroke-width="1.5"/><rect x="1" y="1.5" width="4" height="4" fill="#f2e21c" stroke="#b8a800" stroke-width=".5" transform="rotate(20 3 3.5)"/><rect x="11.5" y="13.5" width="4" height="4" fill="#f2e21c" stroke="#b8a800" stroke-width=".5" transform="rotate(20 13.5 15.5)"/></svg><div class="t" style="left:270px;top:350px;font-size:15.5px;color:#333;letter-spacing:0">gnd!</div><svg class="a" style="left:243px;top:368px" width="18" height="20" viewBox="0 0 18 20"><path d="M3.5 3.5H8V15.5H13.5" fill="none" stroke="#222" stroke-width="1.5"/><rect x="1" y="1.5" width="4" height="4" fill="#f2e21c" stroke="#b8a800" stroke-width=".5" transform="rotate(20 3 3.5)"/><rect x="11.5" y="13.5" width="4" height="4" fill="#f2e21c" stroke="#b8a800" stroke-width=".5" transform="rotate(20 13.5 15.5)"/></svg><div class="t" style="left:270px;top:370px;font-size:15.5px;color:#333;letter-spacing:0">net1</div><svg class="a" style="left:243px;top:388px" width="18" height="20" viewBox="0 0 18 20"><path d="M3.5 3.5H8V15.5H13.5" fill="none" stroke="#222" stroke-width="1.5"/><rect x="1" y="1.5" width="4" height="4" fill="#f2e21c" stroke="#b8a800" stroke-width=".5" transform="rotate(20 3 3.5)"/><rect x="11.5" y="13.5" width="4" height="4" fill="#f2e21c" stroke="#b8a800" stroke-width=".5" transform="rotate(20 13.5 15.5)"/></svg><div class="t" style="left:270px;top:390px;font-size:15.5px;color:#333;letter-spacing:0">net2</div>
<!--/NAV-->

  <!-- splitter & property editor -->
  <div class="a" style="left:209px;top:553px;width:228px;height:9px;background:linear-gradient(#e4e4e4,#c8c8c8)"></div>
  <div class="ttl" style="left:209px;top:562px;width:228px;height:25px"></div>
  <div class="t" style="left:225px;top:566px;font-size:15.5px;font-weight:bold;color:#3c3c3c;word-spacing:2px;letter-spacing:-.1px">Property Editor</div>
  <!--PROP-->
<div class="a" style="left:381px;top:565px;width:15px;height:16px;border-radius:4px;background:linear-gradient(#fafafa,#cfcfcf);border:1px solid #c0c0c0;box-shadow:0 1px 0 #999"></div><div class="a" style="left:400px;top:565px;width:15px;height:16px;border-radius:4px;background:linear-gradient(#fafafa,#cfcfcf);border:1px solid #c0c0c0;box-shadow:0 1px 0 #999"></div><div class="a" style="left:418px;top:565px;width:15px;height:16px;border-radius:4px;background:linear-gradient(#fafafa,#cfcfcf);border:1px solid #c0c0c0;box-shadow:0 1px 0 #999"></div><div class="t" style="left:384px;top:565px;font-size:15px;font-weight:bold;color:#111">?</div><svg class="a" style="left:402px;top:567px" width="12" height="12" viewBox="0 0 12 12"><rect x="3.8" y="1" width="7" height="6.5" fill="none" stroke="#111" stroke-width="1.6"/><rect x="1" y="4.8" width="6.5" height="6" fill="#e8e8e8" stroke="#111" stroke-width="1.6"/></svg><svg class="a" style="left:420px;top:567px" width="12" height="12" viewBox="0 0 12 12"><path d="M1.5 1.5l9 9M10.5 1.5l-9 9" stroke="#111" stroke-width="1.9"/></svg>
<div class="a" style="left:212px;top:592px;width:107px;height:25px;border-radius:6px;background:linear-gradient(#fcfcfc,#d8d8d8);border:1px solid #b8b8b8;box-shadow:0 1px 1px #888"></div>
<div class="rbtn" style="left:299px;top:592px;width:20px;height:25px"></div>
<div class="t" style="left:239px;top:596px;font-size:15.5px;color:#333;letter-spacing:.05px">instance</div>
<div class="a" style="left:323px;top:592px;width:109px;height:25px;border-radius:6px;background:linear-gradient(#fcfcfc,#d8d8d8);border:1px solid #b8b8b8;box-shadow:0 1px 1px #888"></div>
<div class="rbtn" style="left:412px;top:592px;width:20px;height:25px"></div>
<div class="t" style="left:326px;top:596px;font-size:15.5px;color:#333;letter-spacing:.4px">All</div>
<div class="a" style="left:213px;top:621px;width:219px;height:182px;background:#fff;border-left:2px solid #111;border-top:2px solid #111"></div>
<svg class="a" style="left:215px;top:594px" width="20" height="20" viewBox="0 0 20 20"><defs><radialGradient id="og3" cx=".4" cy=".3" r=".8"><stop offset="0" stop-color="#c4cce6"/><stop offset=".6" stop-color="#8c9ccc"/><stop offset="1" stop-color="#6c7eb0"/></radialGradient></defs><circle cx="10" cy="10" r="9.3" fill="url(#og3)" stroke="#6c7eb4" stroke-width=".8"/><text x="10" y="13" font-size="8" font-family="'Liberation Sans',sans-serif" font-weight="bold" fill="#e8ecf8" text-anchor="middle" letter-spacing="-.4">obj</text></svg><div class="t" style="left:243px;top:625px;font-size:15.2px;font-style:italic;color:#4a6888;letter-spacing:-.15px">lvsIgnore</div><div class="t" style="left:343px;top:625px;font-size:15.5px;color:#111;letter-spacing:0">true</div><div class="a" style="left:215px;top:642px;width:196px;height:1px;background:#e4e4e4"></div><div class="t" style="left:243px;top:645px;font-size:15.2px;font-style:italic;color:#4a6888;letter-spacing:-.15px">AC magnit...</div><div class="a" style="left:215px;top:662px;width:196px;height:1px;background:#e4e4e4"></div><div class="t" style="left:243px;top:665px;font-size:15.2px;font-style:italic;color:#4a6888;letter-spacing:-.15px">AC phase</div><div class="a" style="left:215px;top:682px;width:196px;height:1px;background:#e4e4e4"></div><div class="t" style="left:243px;top:685px;font-size:15.5px;color:#111;letter-spacing:.2px">DC voltage</div><div class="t" style="left:343px;top:685px;font-size:15.5px;color:#111;letter-spacing:0">0 V</div><div class="a" style="left:215px;top:702px;width:196px;height:1px;background:#e4e4e4"></div><div class="t" style="left:243px;top:705px;font-size:15.2px;font-style:italic;color:#4a6888;letter-spacing:-.15px">Noise file n...</div><div class="a" style="left:215px;top:722px;width:196px;height:1px;background:#e4e4e4"></div><div class="t" style="left:243px;top:725px;font-size:15.2px;font-style:italic;color:#4a6888;letter-spacing:-.15px">Number of ...</div><div class="t" style="left:343px;top:725px;font-size:15.5px;color:#111;letter-spacing:0">0</div><div class="a" style="left:215px;top:742px;width:196px;height:1px;background:#e4e4e4"></div><div class="t" style="left:243px;top:745px;font-size:15.2px;font-style:italic;color:#4a6888;letter-spacing:-.15px">Temperatur...</div><div class="a" style="left:215px;top:762px;width:196px;height:1px;background:#e4e4e4"></div><div class="t" style="left:243px;top:765px;font-size:15.2px;font-style:italic;color:#4a6888;letter-spacing:-.15px">Temperatur...</div><div class="a" style="left:215px;top:782px;width:196px;height:1px;background:#e4e4e4"></div><div class="a" style="left:337px;top:623px;width:1px;height:160px;background:#e4e4e4"></div>
<div class="a" style="left:411px;top:623px;width:19px;height:160px;background:#909090"></div>
<div class="a" style="left:411px;top:624px;width:19px;height:20px;background:linear-gradient(#ececec,#c8c8c8);border:1px solid #aaa"></div>
<svg class="a" style="left:414px;top:628px" width="13" height="12" viewBox="0 0 13 12"><path d="M1 11L6.5 1L12 11z" fill="#e8e8e8" stroke="#f8f8f8" stroke-width="1.2"/></svg>
<div class="a" style="left:411px;top:646px;width:19px;height:66px;border-radius:9px;background:linear-gradient(90deg,#b4b4b4,#c8c8c8 50%,#bcbcbc);border:1px solid #a8a8a8"></div>
<div class="a" style="left:417px;top:672px;width:8px;height:9px;background:repeating-linear-gradient(#888 0 1px,transparent 1px 3px)"></div>
<div class="a" style="left:411px;top:764px;width:19px;height:19px;background:linear-gradient(#ececec,#c8c8c8);border:1px solid #aaa"></div>
<svg class="a" style="left:414px;top:768px" width="13" height="12" viewBox="0 0 13 12"><path d="M1 1L6.5 11L12 1z" fill="#e0e0e0" stroke="#f8f8f8" stroke-width="1.2"/></svg>
<!-- h scrollbar -->
<div class="a" style="left:215px;top:783px;width:196px;height:19px;background:#909090"></div>
<div class="a" style="left:215px;top:783px;width:19px;height:19px;background:linear-gradient(#ececec,#c8c8c8);border:1px solid #aaa"></div>
<svg class="a" style="left:219px;top:786px" width="12" height="13" viewBox="0 0 12 13"><path d="M11 1L1 6.5L11 12z" fill="#e0e0e0" stroke="#f8f8f8" stroke-width="1.2"/></svg>
<div class="a" style="left:234px;top:783px;width:122px;height:19px;border-radius:9px;background:linear-gradient(#c4c4c4,#b8b8b8);border:1px solid #a8a8a8"></div>
<div class="a" style="left:289px;top:789px;width:10px;height:8px;background:repeating-linear-gradient(90deg,#888 0 1px,transparent 1px 3px)"></div>
<div class="a" style="left:392px;top:783px;width:19px;height:19px;background:linear-gradient(#ececec,#c8c8c8);border:1px solid #aaa"></div>
<svg class="a" style="left:396px;top:786px" width="12" height="13" viewBox="0 0 12 13"><path d="M1 1L11 6.5L1 12z" fill="#e0e0e0" stroke="#f8f8f8" stroke-width="1.2"/></svg>

<!--/PROP-->

  <!-- vertical splitter -->
  <div class="a" style="left:437px;top:159px;width:7px;height:647px;background:linear-gradient(90deg,#b8b8b8,#e0e0e0 40%,#d0d0d0)"></div>

  <!-- canvas -->
  <div class="a" style="left:444px;top:159px;width:887px;height:647px;background:#fff"></div>
  <!--SB-->

<div class="a" style="left:446px;top:161px;width:883px;height:643px;background:#f0f0f0"></div>
<div class="a" style="left:450px;top:162px;width:878px;height:4px;background:linear-gradient(#cc0000 0 3px,#f4e0e0 3px)"></div>
<!-- v scrollbar -->
<div class="a" style="left:1307px;top:166px;width:20px;height:608px;background:#d4d4d4"></div>
<div class="a" style="left:1307px;top:166px;width:20px;height:20px;background:linear-gradient(#e8e8e8,#cfcfcf);border:1px solid #c4c4c4;border-bottom-color:#999"></div>
<svg class="a" style="left:1310px;top:170px" width="14" height="12" viewBox="0 0 14 12"><path d="M1 11L7 1L13 11z" fill="#d8d8d8" stroke="#ececec" stroke-width="1.2"/></svg>
<div class="a" style="left:1307px;top:187px;width:20px;height:568px;border-radius:10px;background:linear-gradient(90deg,#b4b4b4,#bcbcbc 30%,#bababa 70%,#b0b0b0);border:1px solid #b0b0b0"></div>
<div class="a" style="left:1313px;top:465px;width:8px;height:11px;background:repeating-linear-gradient(#909090 0 1px,#c8c8c8 1px 2px,transparent 2px 3px)"></div>
<div class="a" style="left:1307px;top:756px;width:20px;height:18px;background:linear-gradient(#e4e4e4,#cfcfcf);border:1px solid #c4c4c4;border-bottom-color:#999"></div>
<svg class="a" style="left:1310px;top:760px" width="14" height="11" viewBox="0 0 14 11"><path d="M1 1L7 10L13 1z" fill="#d4d4d4" stroke="#e8e8e8" stroke-width="1.2"/></svg>
<!-- h scrollbar -->
<div class="a" style="left:451px;top:783px;width:848px;height:18px;background:#d4d4d4"></div>
<div class="a" style="left:451px;top:783px;width:19px;height:18px;background:linear-gradient(#e8e8e8,#cfcfcf);border:1px solid #c4c4c4;border-bottom-color:#999"></div>
<svg class="a" style="left:455px;top:786px" width="11" height="13" viewBox="0 0 11 13"><path d="M10 1L1 6.5L10 12z" fill="#d8d8d8" stroke="#ececec" stroke-width="1.2"/></svg>
<div class="a" style="left:471px;top:783px;width:808px;height:18px;border-radius:9px;background:linear-gradient(#bebebe,#b8b8b8 60%,#b0b0b0);border:1px solid #b0b0b0"></div>
<div class="a" style="left:870px;top:788px;width:11px;height:8px;background:repeating-linear-gradient(90deg,#909090 0 1px,#c8c8c8 1px 2px,transparent 2px 3px)"></div>
<div class="a" style="left:1280px;top:783px;width:19px;height:18px;background:linear-gradient(#e8e8e8,#cfcfcf);border:1px solid #c4c4c4;border-bottom-color:#999"></div>
<svg class="a" style="left:1284px;top:786px" width="11" height="13" viewBox="0 0 11 13"><path d="M1 1L10 6.5L1 12z" fill="#d8d8d8" stroke="#ececec" stroke-width="1.2"/></svg>

<!--/SB-->
  <!--CANVAS-->
<svg class="a" style="left:450px;top:166px" width="849" height="609" viewBox="0 0 849 609">
<defs><pattern id="gd" x="180.0" y="184.5" width="23.9" height="23.9" patternUnits="userSpaceOnUse"><rect x="0.1" y="0.4" width="2" height="1.5" fill="#6c6c7a"/></pattern>
<pattern id="gD" x="179.5" y="184.0" width="191.2" height="191.2" patternUnits="userSpaceOnUse"><path d="M1.5 -.5L3.5 1.5L1.5 3.5L-.5 1.5z" fill="#fff"/></pattern></defs>
<rect width="849" height="609" fill="#000"/>
<rect x="6" y="6" width="839" height="599" fill="url(#gd)"/>
<rect x="6" y="6" width="839" height="599" fill="url(#gD)"/>
<polyline points="384.15,293.05 384.15,221.35 527.55,221.35 527.55,316.95" fill="none" stroke="#2a9fd6" stroke-width="1.35"/>
<polyline points="336.35,352.8 181.0,352.8 181.0,376.7" fill="none" stroke="#2a9fd6" stroke-width="1.35"/>
<polyline points="181.0,448.4 181.0,496.2" fill="none" stroke="#2a9fd6" stroke-width="1.35"/>
<polyline points="384.15,424.5 384.15,496.2" fill="none" stroke="#2a9fd6" stroke-width="1.35"/>
<polyline points="527.55,388.65 527.55,496.2" fill="none" stroke="#2a9fd6" stroke-width="1.35"/>
<polyline points="384.15,293.05 384.15,328.9 360.25,328.9 360.25,388.65 384.15,388.65 384.15,424.5" fill="none" stroke="#0aa05a" stroke-width="1.35"/>
<polyline points="348.3,328.9 348.3,388.65" fill="none" stroke="#0aa05a" stroke-width="1.35"/>
<polyline points="336.35,352.8 348.3,352.8" fill="none" stroke="#0aa05a" stroke-width="1.35"/>
<polyline points="181.0,376.7 181.0,399.55" fill="none" stroke="#0aa05a" stroke-width="1.35"/>
<polyline points="181.0,425.55 181.0,448.4" fill="none" stroke="#0aa05a" stroke-width="1.35"/>
<circle cx="181.0" cy="412.55" r="13" fill="none" stroke="#0aa05a" stroke-width="1.4"/>
<polyline points="177.0,406.55 185.0,406.55" fill="none" stroke="#0aa05a" stroke-width="1.2"/>
<polyline points="181.0,402.55 181.0,410.55" fill="none" stroke="#0aa05a" stroke-width="1.2"/>
<polyline points="177.0,417.55 185.0,417.55" fill="none" stroke="#0aa05a" stroke-width="1.2"/>
<polyline points="527.55,316.95 527.55,339.8" fill="none" stroke="#0aa05a" stroke-width="1.35"/>
<polyline points="527.55,365.8 527.55,388.65" fill="none" stroke="#0aa05a" stroke-width="1.35"/>
<circle cx="527.55" cy="352.8" r="13" fill="none" stroke="#0aa05a" stroke-width="1.4"/>
<polyline points="523.55,346.8 531.55,346.8" fill="none" stroke="#0aa05a" stroke-width="1.2"/>
<polyline points="527.55,342.8 527.55,350.8" fill="none" stroke="#0aa05a" stroke-width="1.2"/>
<polyline points="523.55,357.8 531.55,357.8" fill="none" stroke="#0aa05a" stroke-width="1.2"/>
<polyline points="181.0,496.2 181.0,532.05" fill="none" stroke="#0aa05a" stroke-width="1.35"/>
<polyline points="169.0,532.05 193.0,532.05 181.0,545.0 169.0,532.05" fill="none" stroke="#0aa05a" stroke-width="1.35"/>
<rect x="176.0" y="491.2" width="10" height="10" fill="#ff0000"/>
<polyline points="384.15,496.2 384.15,532.05" fill="none" stroke="#0aa05a" stroke-width="1.35"/>
<polyline points="372.15,532.05 396.15,532.05 384.15,545.0 372.15,532.05" fill="none" stroke="#0aa05a" stroke-width="1.35"/>
<rect x="379.15" y="491.2" width="10" height="10" fill="#ff0000"/>
<polyline points="527.55,496.2 527.55,532.05" fill="none" stroke="#0aa05a" stroke-width="1.35"/>
<polyline points="515.55,532.05 539.55,532.05 527.55,545.0 515.55,532.05" fill="none" stroke="#0aa05a" stroke-width="1.35"/>
<rect x="522.55" y="491.2" width="10" height="10" fill="#ff0000"/>
<rect x="379.15" y="288.05" width="10" height="10" fill="#ff0000"/>
<rect x="330.85" y="347.3" width="11" height="11" fill="#ff0000"/>
<rect x="379.15" y="419.5" width="10" height="10" fill="#ff0000"/>
<rect x="176.0" y="371.7" width="10" height="10" fill="#ff0000"/>
<rect x="176.0" y="443.4" width="10" height="10" fill="#ff0000"/>
<rect x="521.8" y="311.2" width="11.5" height="11.5" fill="#ff0000"/>
<rect x="521.8" y="382.9" width="11.5" height="11.5" fill="#ff0000"/>
<rect x="503.7" y="316.9" width="47.3" height="70.9" fill="none" stroke="#fff" stroke-width="3.8"/>
<rect x="503.7" y="316.9" width="47.3" height="70.9" fill="none" stroke="#2a2aff" stroke-width="1.6" stroke-dasharray="3.3 2.1"/>
<rect x="681" y="207" width="5" height="5" fill="none" stroke="#d8c000" stroke-width="1.2"/>
<text x="380" y="276" fill="#ff0000" font-size="17" font-family="'Liberation Sans',sans-serif" textLength="11" lengthAdjust="spacingAndGlyphs">D</text>
<text x="332.5" y="347" fill="#ff0000" font-size="17" font-family="'Liberation Sans',sans-serif" textLength="10.5" lengthAdjust="spacingAndGlyphs">G</text>
<text x="380.5" y="444" fill="#ff0000" font-size="17" font-family="'Liberation Sans',sans-serif" textLength="9.5" lengthAdjust="spacingAndGlyphs">S</text>
<text x="400" y="358.3" fill="#d6d6d6" font-size="19" font-family="'Liberation Mono',sans-serif" textLength="67" lengthAdjust="spacingAndGlyphs" xml:space="preserve" style="white-space:pre">W = 6u</text>
<text x="400.5" y="377.8" fill="#d6d6d6" font-size="19" font-family="'Liberation Mono',sans-serif" textLength="85.5" lengthAdjust="spacingAndGlyphs" xml:space="preserve" style="white-space:pre">L = 600n</text>
<text x="483.8" y="330" fill="#d8ceb0" font-size="14.5" font-family="'Liberation Sans',sans-serif" textLength="29.8" lengthAdjust="spacingAndGlyphs">net2</text>
<text x="534" y="330" fill="#ff0000" font-size="14.5" font-family="'Liberation Sans',sans-serif" textLength="14.6" lengthAdjust="spacingAndGlyphs">V1</text>
<text x="545.6" y="347.8" fill="#e07800" font-size="14.5" font-family="'Liberation Sans',sans-serif" textLength="45.5" lengthAdjust="spacingAndGlyphs">vdc=0</text>
<text x="484" y="391" fill="#d8ceb0" font-size="14.5" font-family="'Liberation Sans',sans-serif" textLength="28" lengthAdjust="spacingAndGlyphs">gnd!</text>
<text x="138.6" y="388.5" fill="#d8ceb0" font-size="14.5" font-family="'Liberation Sans',sans-serif" textLength="27.2" lengthAdjust="spacingAndGlyphs">net1</text>
<text x="187" y="388.5" fill="#ff0000" font-size="14.5" font-family="'Liberation Sans',sans-serif" textLength="16.4" lengthAdjust="spacingAndGlyphs">V0</text>
<text x="199" y="407.4" fill="#e07800" font-size="14.5" font-family="'Liberation Sans',sans-serif" textLength="62.4" lengthAdjust="spacingAndGlyphs">vdc=VGS</text>
<text x="137" y="450.5" fill="#d8ceb0" font-size="14.5" font-family="'Liberation Sans',sans-serif" textLength="28.7" lengthAdjust="spacingAndGlyphs">gnd!</text>
<text x="193" y="520.6" fill="#ff0000" font-size="11.5" font-family="'Liberation Sans',sans-serif" textLength="21" lengthAdjust="spacingAndGlyphs">gnd</text>
<rect x="217" y="519.3" width="1.3" height="1.3" fill="#ff0000"/>
<text x="396" y="520.6" fill="#ff0000" font-size="11.5" font-family="'Liberation Sans',sans-serif" textLength="21" lengthAdjust="spacingAndGlyphs">gnd</text>
<rect x="420" y="519.3" width="1.3" height="1.3" fill="#ff0000"/>
<text x="539" y="520.6" fill="#ff0000" font-size="11.5" font-family="'Liberation Sans',sans-serif" textLength="21" lengthAdjust="spacingAndGlyphs">gnd</text>
<rect x="563" y="519.3" width="1.3" height="1.3" fill="#ff0000"/>
</svg>
<!--/CANVAS-->

  <div class="a" style="left:1331px;top:158px;width:2px;height:649px;background:#111"></div>
  <div class="a" style="left:444px;top:806px;width:889px;height:2px;background:#111"></div>
  <!-- status bar -->
  <div class="a" style="left:209px;top:808px;width:1122px;height:24px;background:linear-gradient(#f4f4f4,#c8c8c8);border-top:1px solid #888;border-bottom:1px solid #777;border-radius:0 0 5px 5px"></div>
  <div class="a" style="left:216px;top:817px;width:6px;height:7px;background:repeating-linear-gradient(90deg,#888 0 1px,transparent 1px 2.5px)"></div>
  <div class="t" style="left:226px;top:813px;font-size:15px;color:#3c3c3c;letter-spacing:.15px">mouse L: showClickInfo()</div>
  <div class="t" style="left:689px;top:813px;font-size:15px;color:#333;letter-spacing:.2px">M: schHiMousePopUp()</div>
  <div class="t" style="left:1156px;top:813px;font-size:15px;color:#333;letter-spacing:.2px">R: schHiMousePopUp()</div>
</div>
</div>

<div class="a" style="left:207px;top:833px;width:1126px;height:7px;background:#ececec;border-left:1px solid #999"></div>
<div class="a" style="left:246px;top:835px;width:1px;height:5px;background:#555"></div><div class="a" style="left:934px;top:835px;width:1px;height:5px;background:#555"></div><div class="a" style="left:1015px;top:835px;width:1px;height:5px;background:#555"></div><div class="a" style="left:1159px;top:835px;width:1px;height:5px;background:#555"></div>
</body></html>
